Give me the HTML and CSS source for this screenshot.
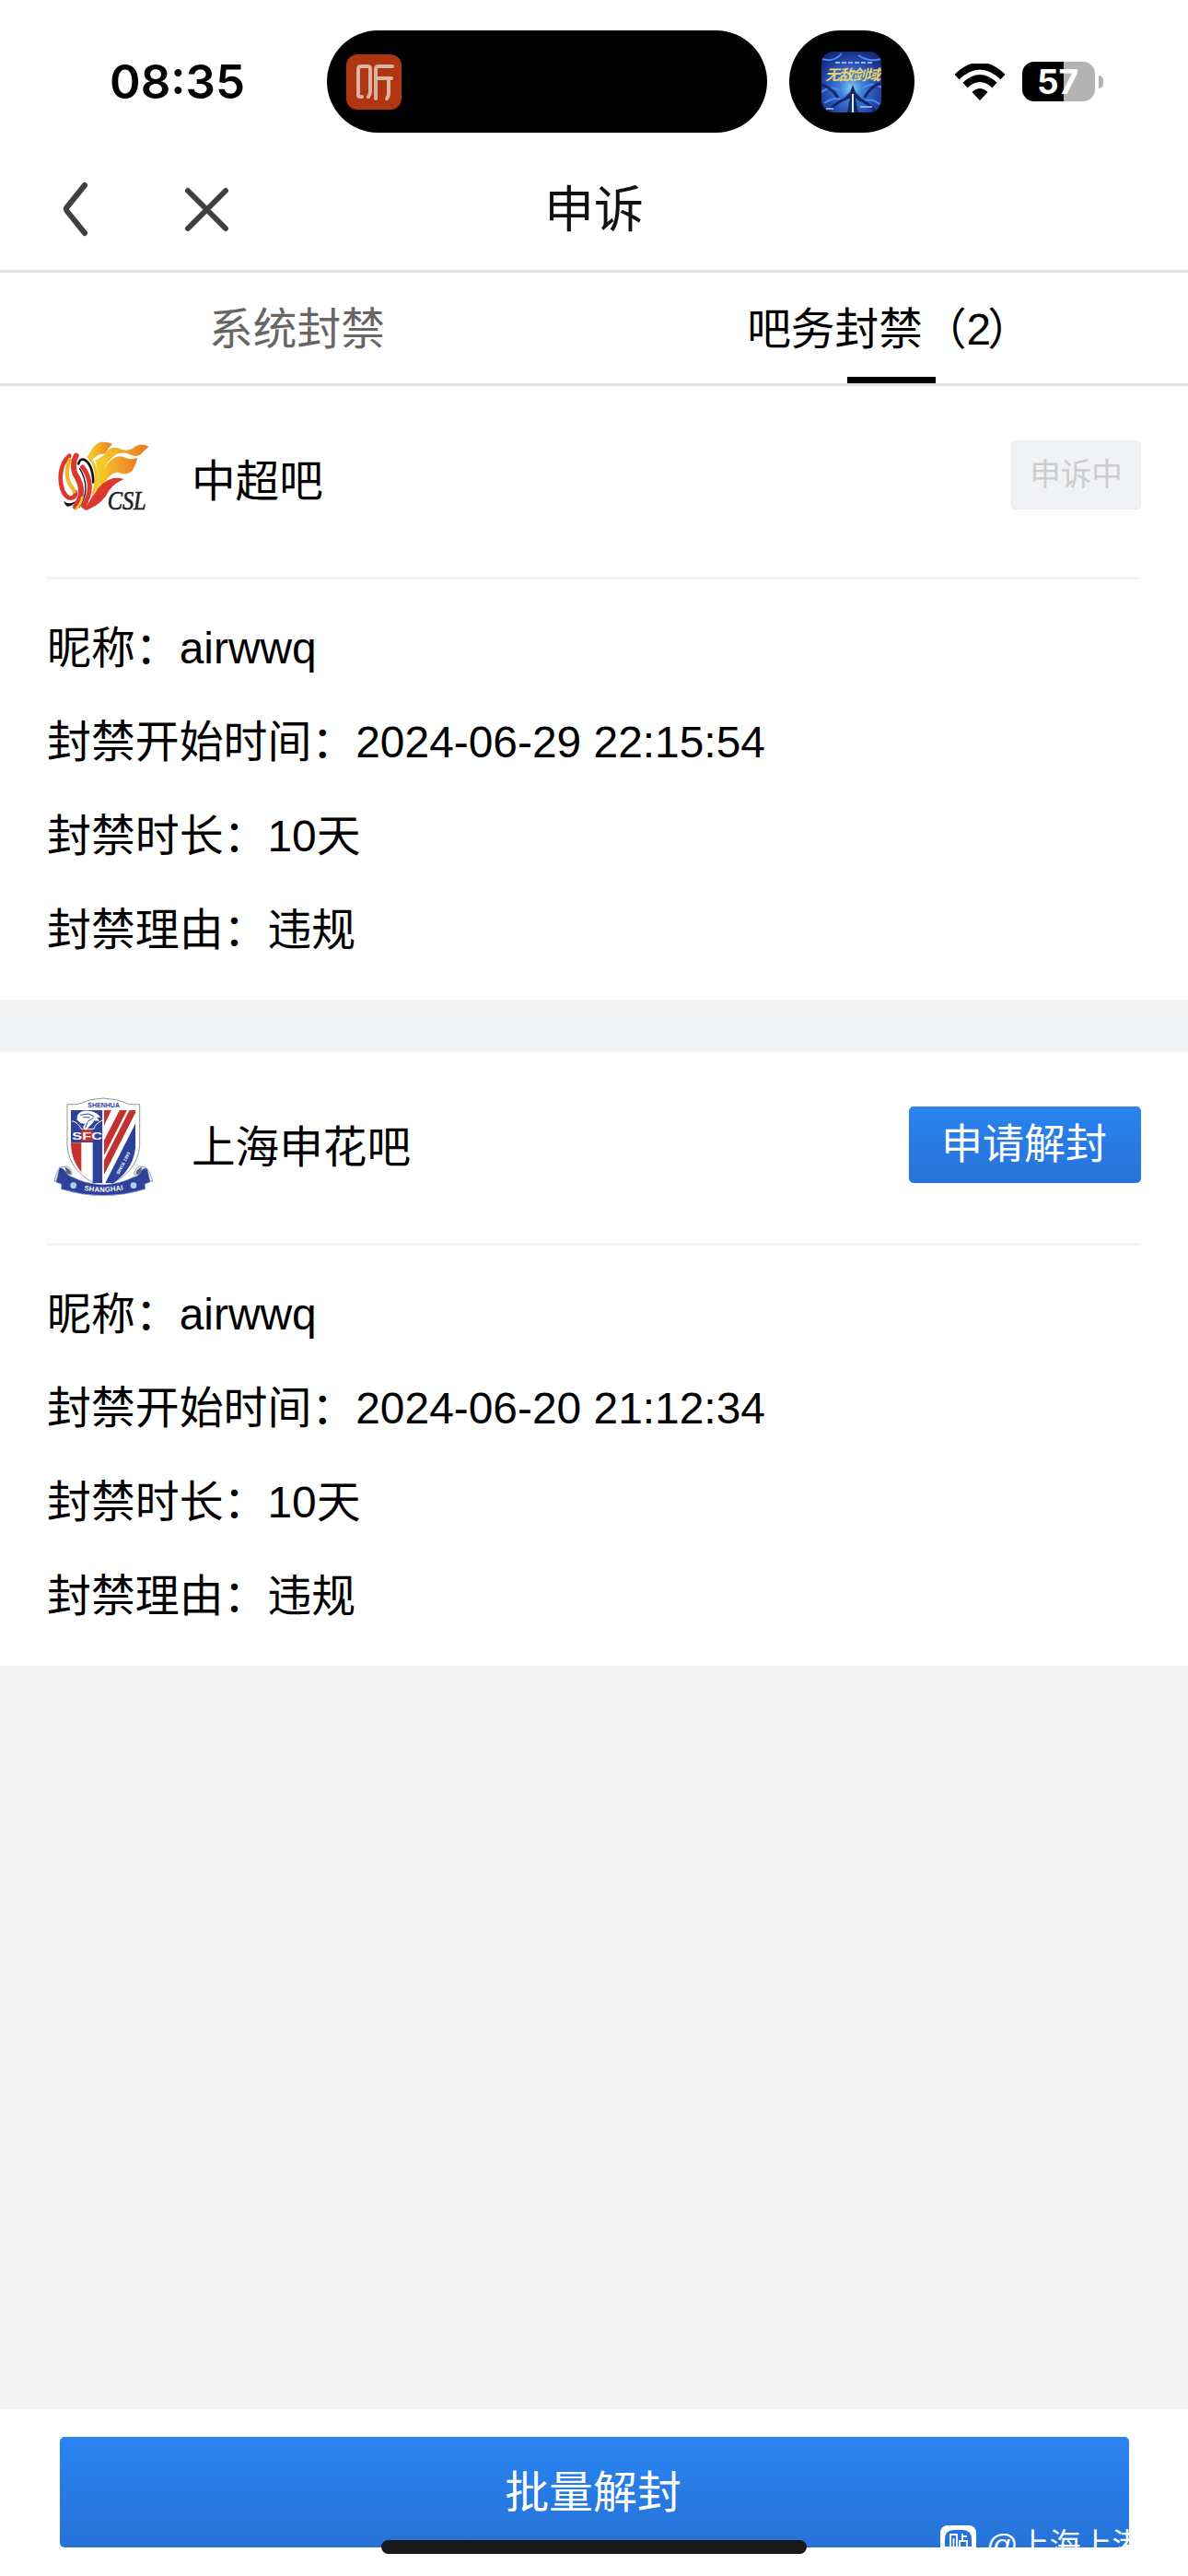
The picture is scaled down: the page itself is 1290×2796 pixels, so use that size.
FILE: index.html
```
<!DOCTYPE html>
<html lang="zh-CN">
<head>
    <meta charset="utf-8">
    <title>申诉</title>
    <link rel="stylesheet" href="styles.css">
</head>
<body>
    <div class="screen">
        <div class="status-bar">
            <span class="time">08:35</span>
            <div class="island">
                <svg class="listen-icon" viewBox="0 0 60 60">
                    <rect width="60" height="60" rx="12" fill="#b03512"/>
                    <g fill="none" stroke="#dcb4a4" stroke-width="4" stroke-linecap="round" stroke-linejoin="round">
                        <path d="M17 46h-2q-2 0-2-2V16q0-3 3-3h7q3 0 3 3v24q0 4-2 6"/>
                        <path d="M50 13H35q-3 0-3 3v32M32 26h17M46 26v16q0 4-2 6"/>
                    </g>
                </svg>
            </div>
            <div class="bubble">
                <svg class="game-icon" viewBox="0 0 65 66">
                    <defs>
                        <radialGradient id="sky" cx="50%" cy="60%" r="65%">
                            <stop offset="0" stop-color="#86cdf5"/>
                            <stop offset="0.3" stop-color="#3c7fd8"/>
                            <stop offset="0.7" stop-color="#2448ad"/>
                            <stop offset="1" stop-color="#172a75"/>
                        </radialGradient>
                        <clipPath id="game-clip"><rect width="65" height="66" rx="13"/></clipPath>
                    </defs>
                    <g clip-path="url(#game-clip)">
                        <rect width="65" height="66" fill="url(#sky)"/>
                        <path d="M0 8q14 4 22-6M40 4q12 8 25 4M0 44q10-8 20-2M44 40q12-8 21-1M3 56q12-8 20-3M43 54q12-4 20 3" fill="none" stroke="#4b8cf0" stroke-width="2"/>
                        <path d="M0 36q12 4 18 14M64 34q-12 5-17 16M8 64q8-9 19-13M58 64q-8-9-19-13" fill="none" stroke="#142766" stroke-width="3"/>
                        <path d="M34 36l3 8 8 9-8-2 3 15H28l3-15-9 2 9-9z" fill="#172a60"/>
                        <path d="M34 46v20" stroke="#d6efff" stroke-width="2"/>
                        <path d="M15 12h40" stroke="#9cb5e6" stroke-width="2" stroke-dasharray="5 2"/>
                        <path d="M5 62h8M42 60h13" stroke="#a5d4ff" stroke-width="1.5"/>
                    </g>
                    <text class="game-name" x="4" y="31" textLength="60">无敌剑域</text>
                </svg>
            </div>
            <svg class="wifi" viewBox="0 0 54 40">
                <path d="M2 14.500q25-24 50 0" fill="none" stroke="#000" stroke-width="7.500"/>
                <path d="M11 23.500q16-15 32 0" fill="none" stroke="#000" stroke-width="7.500"/>
                <path d="M18.500 31q8.500-8 17 0L27 40z"/>
            </svg>
            <div class="battery"><span>57</span></div>
        </div>
        <div class="nav">
            <svg class="nav-icons" viewBox="0 0 190 64">
                <g fill="none" stroke="#404040" stroke-width="6" stroke-linecap="round" stroke-linejoin="round">
                    <path d="M33 6L14 29.500q-2 2.500 0 5L33 58"/>
                    <path d="M145 12l41 41M186 12l-41 41"/>
                </g>
            </svg>
            <h1>申诉</h1>
        </div>
        <div class="tabs">
            <div class="tab">系统封禁</div>
            <div class="tab active"><span>吧务封禁（2<span class="paren">）</span></span></div>
        </div>
        <div class="content">
            <div class="card">
                <div class="card-head">
                    <svg class="logo" viewBox="33 6 360 360">
                        <defs>
                            <linearGradient id="flame" x1="0" x2="1">
                                <stop offset="0" stop-color="#f6d529"/>
                                <stop offset="1" stop-color="#ea7a25"/>
                            </linearGradient>
                        </defs>
                        <path d="M166 105Q190 58 212 59Q232 58 246 66Q230 80 225 98Q200 96 182 117Q175 110 166 105Z" fill="url(#flame)"/>
                        <path d="M190 118Q214 112 236 82Q254 72 276 83Q300 92 322 73Q342 62 365 74Q350 86 339 100Q324 110 301 99Q273 88 251 105Q226 126 216 152Q208 126 190 118Z" fill="url(#flame)"/>
                        <path d="M190 118Q212 124 218 148Q230 124 252 111Q270 100 292 112Q312 118 328 110Q324 132 310 154Q290 170 265 158Q238 158 222 190L190 222Q202 160 190 118Z" fill="url(#flame)"/>
                        <path d="M186 230Q213 185 249 177Q264 174 284 180Q254 192 236 216Q215 260 166 280Q148 286 150 262Z" fill="#dd3730"/>
                        <!-- striped ball -->
                        <path d="M128 94Q176 94 192 142Q202 202 172 252Q150 288 122 282Q82 262 84 186Q86 112 128 94Z" fill="#fff"/>
                        <g fill="none" stroke-linecap="round">
                            <path d="M106 104Q76 130 77 180Q80 228 104 241Q126 246 126 222" stroke="#dd3730" stroke-width="14"/>
                            <path d="M107 118Q90 160 106 194Q118 212 122 220" stroke="#efb82b" stroke-width="13"/>
                            <path d="M128 104Q114 128 124 162Q156 210 138 248L126 270" stroke="#dd3730" stroke-width="18"/>
                            <path d="M136 130Q140 111 157 118Q182 134 184 190" stroke="#111" stroke-width="8"/>
                            <path d="M149 141Q168 164 172 198Q174 232 152 268" stroke="#dd3730" stroke-width="15"/>
                            <path d="M140 146Q160 180 159 214Q157 244 138 272" stroke="#111" stroke-width="4"/>
                            <path d="M168 108Q192 130 193 172Q192 204 184 226" stroke="#f0c22c" stroke-width="9"/>
                            <path d="M148 240Q144 262 128 278" stroke="#f3ca39" stroke-width="8"/>
                        </g>
                        <path d="M88 252Q104 266 126 252Q118 269 100 269Q90 264 88 252Z" fill="#111"/>
                        <text class="csl-text" x="230" y="278" textLength="126" lengthAdjust="spacingAndGlyphs">CSL</text>
                    </svg>
                    <h2>中超吧</h2>
                    <button class="btn-pending" disabled>申诉中</button>
                </div>
                <div class="info">
                    <p>昵称：airwwq</p>
                    <p>封禁开始时间：2024-06-29 22:15:54</p>
                    <p>封禁时长：10天</p>
                    <p>封禁理由：违规</p>
                </div>
            </div>
            <div class="card">
                <div class="card-head">
                    <svg class="logo" viewBox="33 45 360 360">
                        <defs>
                            <clipPath id="shield">
                                <path d="M111 104H322V220Q318 295 249 342H184Q115 295 111 220Z"/>
                            </clipPath>
                        </defs>
                        <path d="M99 86H132Q216 46 302 86H335V220Q330 310 216 358Q104 310 99 220Z" fill="#fff" stroke="#566" stroke-width="2"/>
                        <g clip-path="url(#shield)">
                            <path d="M111 104H214V210H111Z" fill="#2c429b"/>
                            <path d="M145 166H182V207H145ZM111 211H145V320H111Z" fill="#c4312f"/>
                            <path d="M182 210H214V350H182Z" fill="#2c429b"/>
                            <path d="M219 104H243L219 155ZM270 104H294L219 252V203ZM302 104H322V112L219 315V268Z" fill="#c4312f"/>
                            <path d="M322 147V350H219Z" fill="#2c429b"/>
                            <path d="M214 104h5v246h-5z" fill="#fff"/>
                        </g>
                        <path d="M133 120Q147 103 175 108Q197 112 208 129L195 128L204 140L188 139Q181 149 169 160L160 171L150 160L158 149L143 148L130 136Z" fill="#fff"/>
                        <path d="M142 121l26-4 18 8M151 128l22 1M165 142l20-12M165 145l-7 18" fill="none" stroke="#2c429b" stroke-width="3"/>
                        <path d="M114 140q20 4 31 26h41q4-18 28-28" fill="none" stroke="#fff" stroke-width="3"/>
                        <text class="crest-text crest-sfc" x="115" y="200" textLength="98" lengthAdjust="spacingAndGlyphs">SFC</text>
                        <text class="crest-text crest-blue" x="166" y="95" textLength="104" lengthAdjust="spacingAndGlyphs">SHENHUA</text>
                        <text class="crest-text crest-small" transform="translate(267 315) rotate(-62)" textLength="80" lengthAdjust="spacingAndGlyphs">SINCE 1993</text>
                        <path d="M78 291L97 288Q111 291 115 313Q107 321 99 314L82 301L68 334L57 337Q63 303 78 291ZM354 291L335 288Q322 291 317 313Q325 321 333 314L351 301L365 334L377 337Q369 303 354 291Z" fill="#fff" stroke="#53639d" stroke-width="2"/>
                        <path d="M73 292Q84 290 96 307Q101 319 113 321Q216 373 318 321Q332 320 337 306Q345 290 360 295L370 339L352 346L354 362Q216 405 79 362L80 346L62 340Z" fill="#2c429b" stroke="#b9c2dd" stroke-width="2"/>
                        <path d="M91 291q18 3 21 21q-8 5-15-2zM343 291q-18 3-21 21q8 5 15-2z" fill="#596778"/>
                        <circle cx="119" cy="350" r="10" fill="#b6cff0"/>
                        <circle cx="315" cy="350" r="10" fill="#b6cff0"/>
                        <path id="ribbon" d="M154 366Q216 377 283 364" fill="none"/>
                        <text class="crest-text crest-city"><textPath href="#ribbon" textLength="128">SHANGHAI</textPath></text>
                    </svg>
                    <h2>上海申花吧</h2>
                    <button class="btn-apply">申请解封</button>
                </div>
                <div class="info">
                    <p>昵称：airwwq</p>
                    <p>封禁开始时间：2024-06-20 21:12:34</p>
                    <p>封禁时长：10天</p>
                    <p>封禁理由：违规</p>
                </div>
            </div>
        </div>
        <div class="footer">
            <button class="btn-batch">批量解封</button>
            <div class="watermark">
                <svg viewBox="0 0 39 39">
                    <rect width="39" height="39" rx="8" fill="#fff"/>
                    <path d="M5 23V15Q5 5 15 5H24Q34 5 34 15V23Z" fill="#2674db"/>
                    <path d="M11 23V10h7v13M14.500 14v9M24 9v8M24 12h5M21 23v-6h8v6" fill="none" stroke="#fff" stroke-width="1.800"/>
                </svg>
                <span>@上海上港</span>
            </div>
            <div class="home-bar"></div>
        </div>
    </div>
</body>
</html>
```
FILE: styles.css
```
* {
    box-sizing: border-box;
    margin: 0;
    padding: 0;
}
body {
    background-color: #fff;
    color: #000;
    font-family: "Liberation Sans", "Noto Sans CJK SC", sans-serif;
}
.screen {
    width: 1290px;
    height: 2796px;
    display: flex;
    flex-direction: column;
    overflow: hidden;
}
.status-bar {
    height: 177px;
    padding: 33px 0 33px 119px;
    display: flex;
    align-items: center;
}
.time {
    width: 236px;
    font: 600 51px/60px Inter, sans-serif;
}
.island {
    width: 478px;
    height: 111px;
    padding: 26px 21px;
    border-radius: 56px;
    background-color: #000;
}
.listen-icon {
    display: block;
    width: 60px;
    height: 60px;
}
.bubble {
    width: 136px;
    height: 111px;
    margin-left: 24px;
    padding: 23px 35px;
    border-radius: 56px;
    background-color: #000;
}
.game-icon {
    display: block;
    width: 65px;
    height: 66px;
}
.game-name {
    font: italic 700 16px "Noto Sans CJK SC", sans-serif;
    fill: #ecd16e;
}
.wifi {
    width: 54px;
    height: 40px;
    margin-left: 44px;
}
.battery {
    position: relative;
    width: 79px;
    height: 43px;
    margin-left: 19px;
    padding-right: 2px;
    border-radius: 13px;
    background: linear-gradient(to right, #000 57%, #b3b3b3 57%);
    color: #fff;
    text-align: center;
    font: 700 37px/43px Inter, sans-serif;
}
.battery::after {
    content: "";
    position: absolute;
    left: 83px;
    top: 15px;
    width: 5px;
    height: 14px;
    border-radius: 0 5px 5px 0;
    background-color: #b3b3b3;
}
.nav {
    height: 119px;
    padding: 18px 0 0 59px;
    border-bottom: 3px solid #e3e3e3;
    display: flex;
}
.nav-icons {
    width: 190px;
    height: 64px;
}
.nav h1 {
    width: 792px;
    text-align: center;
    font-size: 54px;
    font-weight: 400;
    line-height: 67px;
    color: #111;
}
.tabs {
    height: 123px;
    border-bottom: 3px solid #e3e3e3;
    display: flex;
}
.tab {
    flex: 1;
    display: flex;
    flex-direction: column;
    align-items: center;
    justify-content: space-between;
    font-size: 47.7px;
    line-height: 124px;
    color: #666;
}
.active {
    color: #000;
}
.active::after {
    content: "";
    width: 96px;
    height: 7px;
    margin-top: -11px;
    background-color: #000;
}
.paren {
    margin: 0 4px 0 -4px;
}
.content {
    flex: 1;
    background-color: #f4f4f4;
}
.card {
    height: 666px;
    padding: 0 51px;
    background-color: #fff;
}
.card + .card {
    margin-top: 57px;
    box-shadow: 0 -38px #f1f3f5;
}
.card-head {
    height: 210px;
    padding-top: 43px;
    border-bottom: 3px solid #f4f4f4;
    display: flex;
    align-items: flex-start;
}
.logo {
    width: 120px;
    height: 120px;
}
.csl-text {
    font: italic 86px "Liberation Serif", serif;
    fill: #222;
    stroke: #222;
    stroke-width: 2px;
}
.crest-text {
    font-family: "Liberation Sans", sans-serif;
    font-weight: 700;
    fill: #fff;
}
.crest-sfc {
    font-size: 34px;
}
.crest-blue {
    font-size: 21px;
    fill: #2c429b;
}
.crest-small {
    font-size: 14px;
}
.crest-city {
    font-size: 23px;
}
.card h2 {
    flex: 1;
    margin-left: 37px;
    font-size: 47.6px;
    font-weight: 400;
    line-height: 122px;
}
button {
    border: 0;
    font-family: inherit;
    color: #fff;
    background: linear-gradient(#2a83f0, #2673d8);
    border-radius: 5px;
}
.btn-pending {
    width: 141px;
    height: 75px;
    margin-top: 16px;
    font-size: 33.6px;
    line-height: 71px;
    color: #ccc;
    background: #f0f2f5;
    border: 1px solid #ededef;
}
.btn-apply {
    width: 252px;
    height: 83px;
    margin-top: 16px;
    padding: 1px 2px 0 0;
    font-size: 45px;
    line-height: 82px;
}
.info {
    padding-top: 24px;
}
.info p {
    font-size: 47.9px;
    line-height: 102px;
}
.footer {
    position: relative;
    height: 181px;
    padding: 30px 64px 0 65px;
    background-color: #fff;
}
.btn-batch {
    display: block;
    width: 1161px;
    height: 120px;
    padding: 2px 3px 0 0;
    font-size: 47.9px;
    line-height: 118px;
}
/* stamp over the lower right corner of the button */
.watermark {
    position: absolute;
    left: 1021px;
    top: 126px;
    display: flex;
    gap: 11px;
    width: 269px;
    color: #fff;
    font-size: 34px;
    line-height: 42px;
    white-space: nowrap;
    overflow: hidden;
}
.watermark svg {
    width: 39px;
    height: 39px;
}
.home-bar {
    position: absolute;
    left: 414px;
    top: 142px;
    width: 462px;
    height: 15px;
    border-radius: 8px;
    background-color: #181818;
}
```
